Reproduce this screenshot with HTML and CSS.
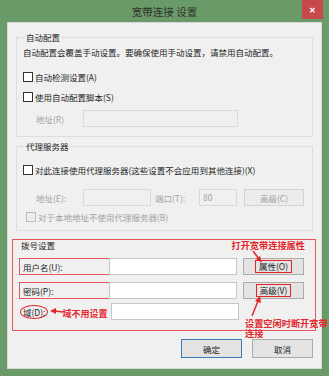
FILE: index.html
```html
<!DOCTYPE html>
<html lang="zh-CN">
<head>
  <meta charset="UTF-8" />
  <title>宽带连接 设置</title>
  <link rel="stylesheet" href="styles.css">
</head>
<body>
  <div class="window">
    <div class="titlebar">
      <span></span>
      <span class="title">宽带连接 设置</span>
      <span class="close">✕</span>
    </div>
    <div class="client">
      <fieldset class="group auto">
        <legend>自动配置</legend>
        <p class="desc">自动配置会覆盖手动设置。要确保使用手动设置，请禁用自动配置。</p>
        <div class="check first"><span class="box"></span>自动检测设置(A)</div>
        <div class="check second"><span class="box"></span>使用自动配置脚本(S)</div>
        <div class="row addr-r">
          <span class="lbl off">地址(R)</span>
          <span class="field off long"></span>
        </div>
      </fieldset>

      <fieldset class="group proxy">
        <legend>代理服务器</legend>
        <div class="check first"><span class="box"></span>对此连接使用代理服务器(这些设置不会应用到其他连接)(X)</div>
        <div class="row addr-e">
          <span class="lbl off">地址(E):</span>
          <span class="field off short"></span>
          <span class="lbl off port">端口(T):</span>
          <span class="field off tiny">80</span>
          <span class="btn off">高级(C)</span>
        </div>
        <div class="check bypass off"><span class="box off"></span>对于本地地址不使用代理服务器(B)</div>
      </fieldset>

      <div class="dial">
        <div class="dial-head">
          <span>拨号设置</span>
          <span class="note">打开宽带连接属性</span>
        </div>
        <div class="dial-row r1">
          <div class="marked">
            <span>用户名(U):</span>
            <span class="field"></span>
          </div>
          <span class="btn"><span class="mark">属性(O)</span></span>
        </div>
        <div class="dial-row r2">
          <div class="marked">
            <span>密码(P):</span>
            <span class="field"></span>
          </div>
          <span class="btn"><span class="mark">高级(V)</span></span>
        </div>
        <div class="dial-row r3">
          <span class="circled">域(D):</span>
          <span class="note small">域不用设置</span>
          <span class="field domain"></span>
        </div>
        <div class="note idle">设置空闲时断开宽带连接</div>
        <svg class="arrows" width="304" height="100" viewBox="0 0 304 100">
          <g stroke="#e3262c" stroke-width="1.5" fill="#e3262c">
            <line x1="240" y1="11" x2="246" y2="19" />
            <polygon points="249,23 243,19 247,16" stroke="none" />
            <line x1="239" y1="76" x2="245" y2="61" />
            <polygon points="247,56 248,63 242,61" stroke="none" />
            <line x1="50" y1="72" x2="42" y2="71" />
            <polygon points="37,71 43,68 43,74" stroke="none" />
          </g>
        </svg>
      </div>

      <div class="actions">
        <span class="btn main focus">确定</span>
        <span class="btn main">取消</span>
      </div>
    </div>
  </div>
</body>
</html>
```

FILE: styles.css
```css
* {
  box-sizing: border-box;
}
body {
  margin: 0;
  background: #6b9a69;
  font-family: "Noto Sans CJK SC", "Liberation Sans", sans-serif;
  font-size: 8.5px;
  color: #1e1e1e;
}
.window {
  width: 329px;
  height: 376px;
  background: #6b9a69;
}
.titlebar {
  height: 22px;
  display: grid;
  grid-template-columns: 1fr auto 1fr;
  align-items: start;
}
.title {
  font-size: 10.5px;
  line-height: 24px;
  color: #2b332b;
}
.close {
  justify-self: end;
  margin-right: 6px;
  width: 21px;
  height: 19px;
  background: #c9484c;
  color: #fff;
  font-size: 8px;
  font-weight: bold;
  display: flex;
  align-items: center;
  justify-content: center;
}
.client {
  margin: 0 7px;
  height: 347px;
  background: #f0f0f0;
  border: 1px solid #d8d8d8;
  padding-top: 8px;
}
.group {
  margin: 0 8px;
  border: 1px solid #dedede;
  padding: 0 6px;
  min-width: 0;
}
.group legend {
  padding: 0 1px;
  margin-left: 2px;
  line-height: 12px;
}
.auto {
  padding-bottom: 9px;
}
.proxy {
  margin-top: 3px;
  padding-bottom: 7px;
}
.desc {
  margin: 3px 0 0;
  line-height: 12px;
}
.check {
  display: flex;
  align-items: center;
  line-height: 12px;
  height: 12px;
}
.check.first {
  margin-top: 13px;
}
.proxy .check.first {
  margin-top: 12px;
}
.check.second {
  margin-top: 8px;
}
.check.bypass {
  margin-top: 5px;
  padding-left: 3px;
}
.box {
  width: 10px;
  height: 10px;
  border: 1px solid #333;
  background: #fff;
  margin-right: 2px;
  flex: none;
}
.box.off {
  border-color: #bcbcbc;
  background: #ececec;
}
.off {
  color: #a3a3a3;
}
.row {
  display: flex;
  align-items: center;
  padding-left: 13px;
}
.addr-r {
  margin-top: 7px;
}
.addr-e {
  margin-top: 13px;
}
.lbl {
  width: 47px;
  flex: none;
}
.lbl.port {
  width: 44px;
  margin-left: 4px;
}
.field {
  height: 18px;
  background: #fff;
  border: 1px solid #b6b6b6;
  flex: none;
}
.field.off {
  background: #f0f0f0;
  border-color: #dadada;
  height: 17px;
  line-height: 15px;
  padding-left: 3px;
}
.field.long {
  width: 155px;
}
.field.short {
  width: 68px;
}
.field.tiny {
  width: 38px;
}
.btn {
  width: 61px;
  height: 17px;
  border: 1px solid #acacac;
  background: #e3e3e3;
  display: flex;
  align-items: center;
  justify-content: center;
  flex: none;
}
.btn.off {
  margin-left: 7px;
  width: 60px;
  border-color: #d3d3d3;
  background: #ececec;
}
.dial {
  position: relative;
  margin: 8px 5px 0 4px;
  height: 92px;
  border: 1px solid #e4585c;
  padding: 0 10px 0 6px;
}
.dial-head {
  display: flex;
  justify-content: space-between;
  line-height: 11px;
  padding-left: 2px;
  margin-top: 0;
}
.note {
  color: #e3262c;
  font-weight: bold;
  font-size: 9.2px;
}
.dial-row {
  display: flex;
  align-items: center;
}
.r1 {
  margin-top: 7px;
}
.r2 {
  margin-top: 7px;
}
.r3 {
  margin-top: 4px;
}
.marked {
  width: 218px;
  height: 17px;
  border: 1px solid #e4585c;
  display: flex;
  align-items: center;
  justify-content: space-between;
  padding-left: 3px;
  margin-right: 6px;
}
.marked .field {
  width: 128px;
  height: 17px;
  margin-top: -1px;
  margin-right: -1px;
  border-color: #c6c6c6;
}
.mark {
  border: 1px solid #e3262c;
  padding: 0 3px;
  line-height: 11px;
}
.circled {
  border: 1px solid #e3262c;
  border-radius: 50%;
  padding: 1px 2px;
  margin-left: 1px;
  line-height: 10px;
}
.note.small {
  font-size: 9px;
  margin-left: 14px;
  margin-top: 3px;
}
.field.domain {
  width: 128px;
  height: 17px;
  margin-left: 4px;
  border-color: #c6c6c6;
}
.note.idle {
  position: absolute;
  left: 232px;
  top: 78px;
  width: 90px;
  line-height: 10px;
}
.arrows {
  position: absolute;
  left: 0;
  top: 0;
  pointer-events: none;
}
.actions {
  display: flex;
  justify-content: flex-end;
  gap: 10px;
  margin-top: 8px;
  padding-right: 8px;
}
.btn.main {
  width: 61px;
  height: 19px;
}
.btn.focus {
  border-color: #3d7ab8;
}
```
